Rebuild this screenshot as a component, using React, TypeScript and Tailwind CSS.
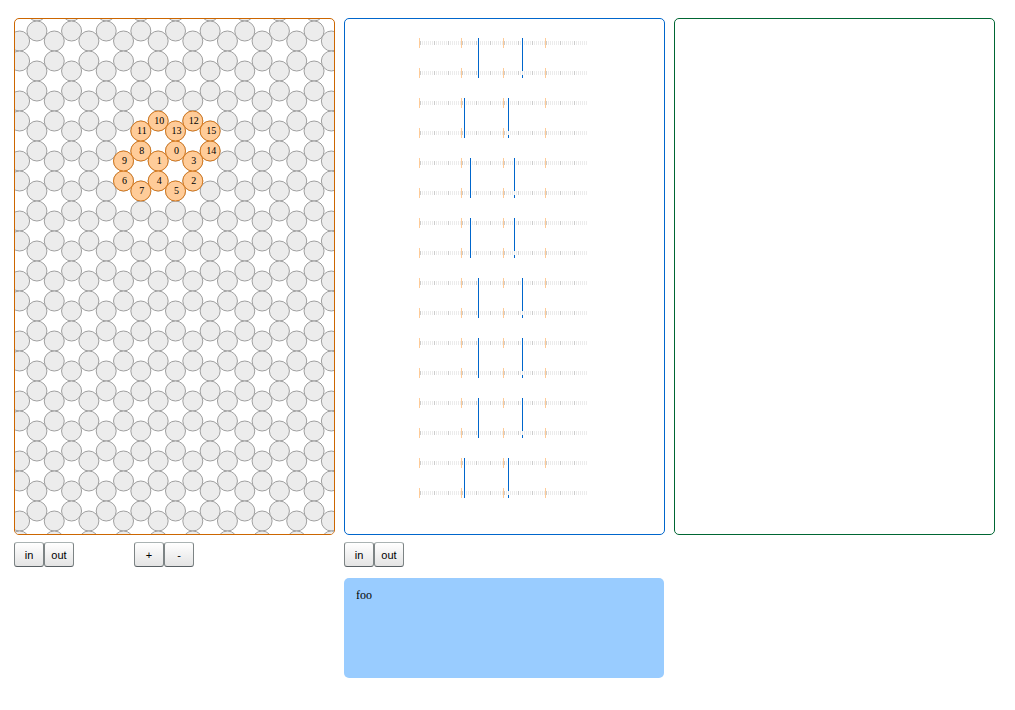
import React from "react";

type Cell = { x: number; y: number };

const COLUMN_STEP = 10 * Math.sqrt(3);
const FIRST_X = 4.6;

const cells: Cell[] = [];
for (let col = 0; col < 19; col++) {
  const offsets = col % 2 === 0 ? [22, 42] : [-8, 12];
  for (let row = 0; row < 9; row++) {
    for (const offset of offsets) {
      cells.push({ x: FIRST_X + col * COLUMN_STEP, y: offset + row * 60 });
    }
  }
}

const helices: { column: number; y: number }[] = [
  { column: 9, y: 132 },
  { column: 8, y: 142 },
  { column: 10, y: 162 },
  { column: 10, y: 142 },
  { column: 8, y: 162 },
  { column: 9, y: 172 },
  { column: 6, y: 162 },
  { column: 7, y: 172 },
  { column: 7, y: 132 },
  { column: 6, y: 142 },
  { column: 8, y: 102 },
  { column: 7, y: 112 },
  { column: 10, y: 102 },
  { column: 9, y: 112 },
  { column: 11, y: 132 },
  { column: 11, y: 112 },
];

const crossovers = [58, 44, 50, 50, 58, 58, 58, 44];
const bases = Array.from({ length: 84 }, (_, i) => i);

function Lattice() {
  return (
    <svg className="block h-full w-full" role="img" aria-label="Honeycomb lattice">
      <g fill="#ececec" stroke="#a0a0a0">
        {cells.map((c, i) => (
          <circle key={i} cx={c.x} cy={c.y} r="10" />
        ))}
      </g>
      <g fill="#ffcc99" stroke="#d67a1f">
        {helices.map((h, i) => (
          <circle key={i} cx={FIRST_X + h.column * COLUMN_STEP} cy={h.y} r="10" />
        ))}
      </g>
      <g className="font-['Liberation_Serif',serif] text-[10px]" textAnchor="middle">
        {helices.map((h, i) => (
          <text key={i} x={FIRST_X + 1 + h.column * COLUMN_STEP} y={h.y + 3}>
            {i}
          </text>
        ))}
      </g>
    </svg>
  );
}

function Strand({ y }: { y: number }) {
  return (
    <g shapeRendering="crispEdges">
      {bases.map((i) => (
        <rect key={i} x={1 + i * 2} y={y + 3} width="1" height="4" fill={i % 7 === 0 ? "#cccccc" : "#ececec"} />
      ))}
      {[0, 42, 84, 126].map((x) => (
        <rect key={x} x={x} y={y} width="1" height="10" fill="#ffcc99" />
      ))}
    </g>
  );
}

function Paths() {
  return (
    <svg className="mx-auto block h-[480px] w-[171px]" role="img" aria-label="Strand paths">
      {crossovers.map((x, i) => (
        <g key={i}>
          <Strand y={i * 60} />
          <Strand y={i * 60 + 30} />
          <g fill="#0066cc" shapeRendering="crispEdges">
            <rect x={x + 1} y={i * 60} width="1" height="40" />
            <rect x={x + 45} y={i * 60} width="1" height="33" />
            <rect x={x + 45} y={i * 60 + 37} width="1" height="3" />
          </g>
        </g>
      ))}
    </svg>
  );
}

function ToolButton({ label }: { label: string }) {
  return (
    <button
      type="button"
      className="h-[25px] w-[30px] rounded-[3px] border border-t-[#aab3b3] border-r-[#7d8485] border-b-[#585f63] border-l-[#7d8485] bg-linear-to-b from-white to-[#e4e4e4] pt-0.5 text-center font-['Liberation_Sans',sans-serif] text-[11px] text-black"
    >
      {label}
    </button>
  );
}

export default function App() {
  return (
    <main className="grid grid-cols-3 items-start gap-x-[9px] bg-white pt-[18px] pr-5 pl-[14px]">
      <section>
        <div className="h-[517px] overflow-hidden rounded-[5px] border border-[#cc6600]">
          <Lattice />
        </div>
        <div className="mt-[7px] flex gap-[60px]">
          <div className="flex">
            <ToolButton label="in" />
            <ToolButton label="out" />
          </div>
          <div className="flex">
            <ToolButton label="+" />
            <ToolButton label="-" />
          </div>
        </div>
      </section>
      <section>
        <div className="h-[517px] rounded-[5px] border border-[#0066cc] pt-[19px]">
          <Paths />
        </div>
        <div className="mt-[7px] flex">
          <ToolButton label="in" />
          <ToolButton label="out" />
        </div>
        <p className="mt-[11px] mr-px h-[100px] rounded-[5px] bg-[#99ccff] px-3 pt-[9px] font-['Liberation_Serif',serif] text-[12px] leading-4 text-black">
          foo
        </p>
      </section>
      <section className="h-[517px] rounded-[5px] border border-[#006633]" />
    </main>
  );
}
